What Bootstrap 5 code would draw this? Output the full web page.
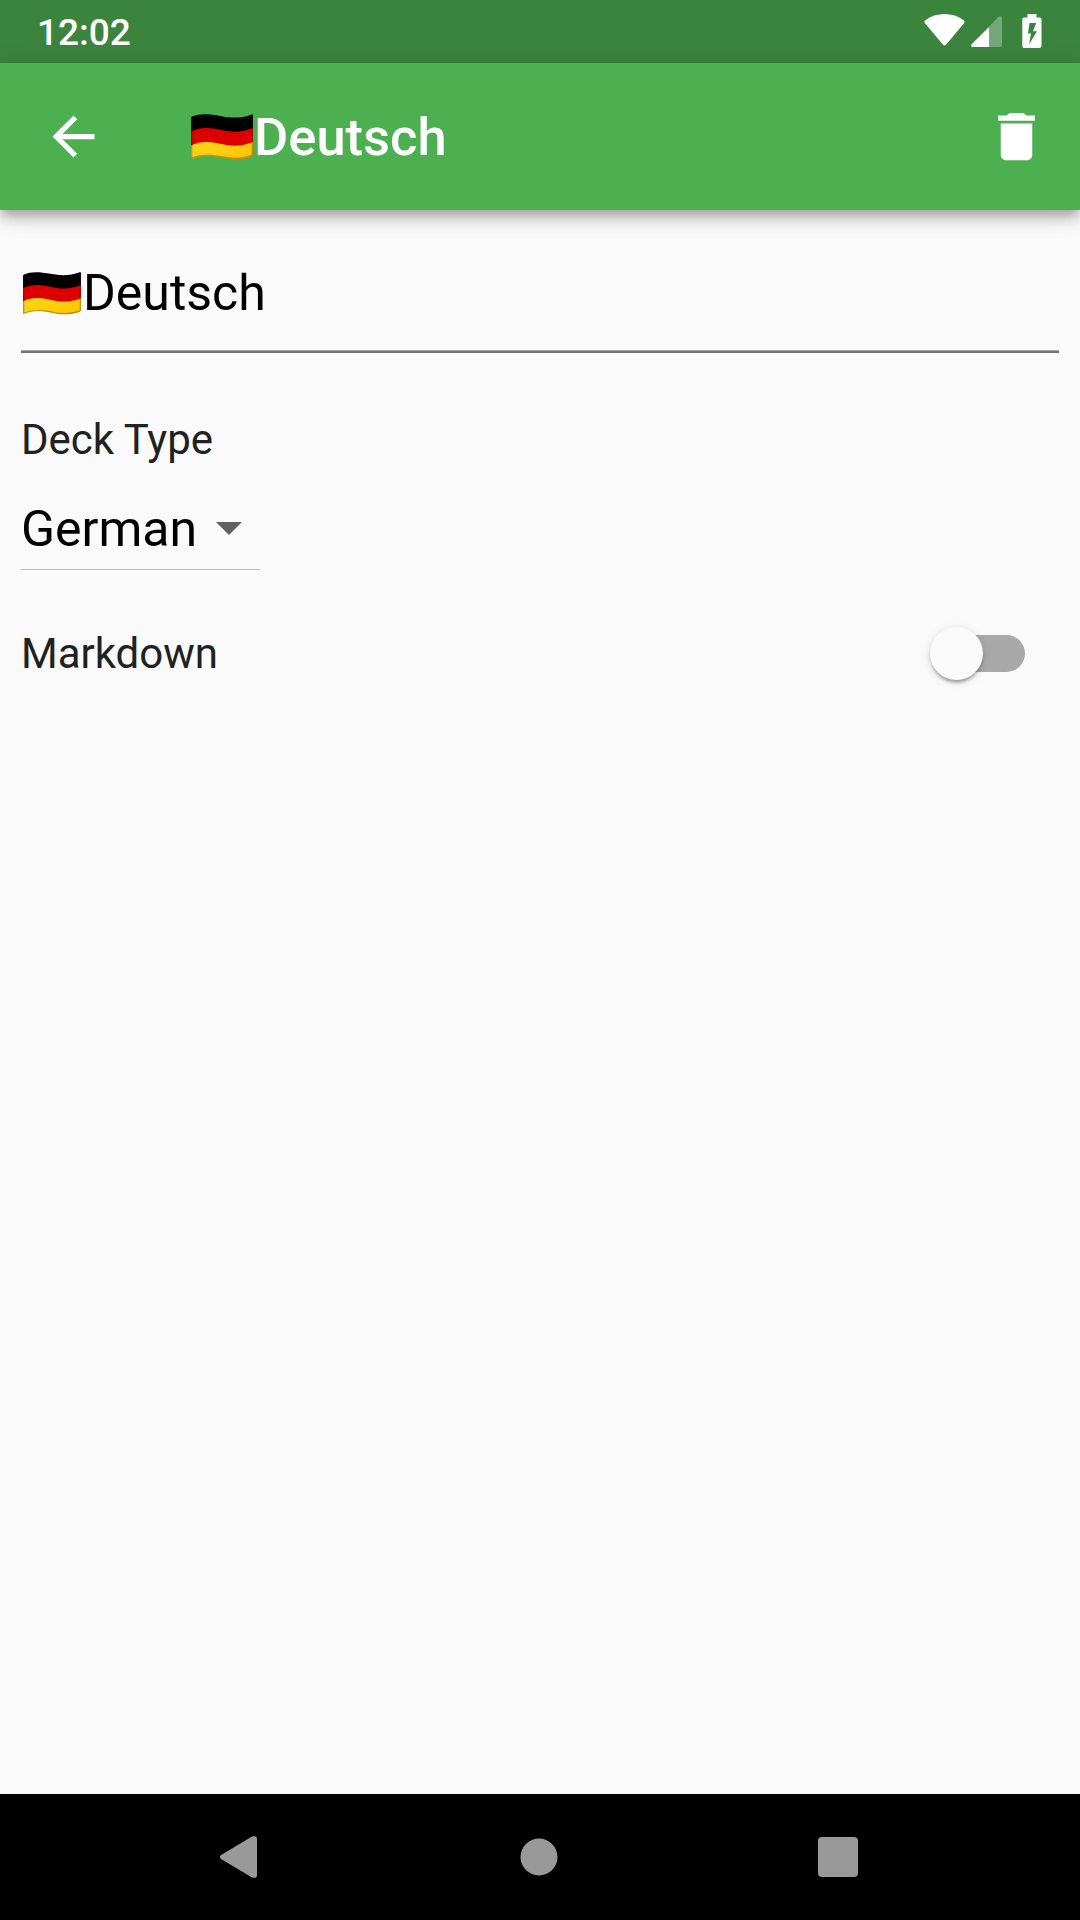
<!DOCTYPE html>
<html lang="en">
<head>
<meta charset="utf-8">
<meta name="viewport" content="width=device-width, initial-scale=1">
<title>Deck settings</title>
<link href="https://cdn.jsdelivr.net/npm/bootstrap@5.3.0/dist/css/bootstrap.min.css" rel="stylesheet">
<style>
  body { font-family: Roboto, "Noto Sans", sans-serif; background: #fafafa; color: #000; height: 1920px; overflow: hidden; }
  svg { display: block; flex: none; }
  .status-strip { height: 63px; background: #3b843e; color: #fff; padding: 2px 38px 0 37px; font-size: 37px; font-weight: 500; line-height: 63px; }
  .status-icons { height: 34px; margin-top: -3px; }
  .battery { margin-left: 19px; }
  .app-bar { height: 147px; background: #4caf50; color: #fff; padding: 0 32px 0 42px; box-shadow: 0 5px 10px -2px rgba(0,0,0,.2), 0 10px 13px rgba(0,0,0,.14), 0 3px 26px rgba(0,0,0,.12); z-index: 1; }
  .app-title { font-size: 52.5px; font-weight: 500; line-height: 60px; margin-left: 86px; }
  .app-title svg { margin-right: 1px; }
  .settings { padding: 53px 21px 0; }
  .name-field { font-size: 50px; line-height: 60px; padding-bottom: 30px; box-shadow: inset 0 -2px #727272, inset 0 -3px #a8a8a8; height: 90px; }
  .name-field svg { margin-right: 2px; }
  .item-label { font-size: 42px; line-height: 50px; color: #212121; }
  .deck-label { margin-top: 62px; }
  .type-select { margin-top: 34px; width: 239px; height: 71px; padding-bottom: 10px; font-size: 50px; line-height: 60px; border-bottom: 1px solid #bdbdbd; padding-right: 18.500px; }
  .type-select svg { margin-top: -2px; }
  .switch-row { margin-top: 21px; height: 126px; padding-right: 34px; }
  .toggle { width: 95px; height: 53px; margin-top: -1px; }
  .toggle-track { width: 87px; height: 37px; border-radius: 19px; background: #a9a9a9; }
  .toggle-thumb { left: 0; top: 0; width: 53px; height: 53px; border-radius: 50%; background: #fafafa; box-shadow: 0 5px 3px -3px rgba(0,0,0,.2), 0 3px 3px rgba(0,0,0,.14), 0 2px 8px rgba(0,0,0,.14); }
  .nav-strip { height: 126px; background: #000; padding: 0 222px 0 219px; }
  .nav-home { margin-left: 3.500px; }
</style>
</head>
<body class="d-flex flex-column">
<svg width="0" height="0" class="position-absolute" aria-hidden="true">
  <defs>
    <linearGradient id="gold" x1="0" y1="0" x2="1" y2="1"><stop offset="0" stop-color="#ffd91a"/><stop offset="1" stop-color="#ffc000"/></linearGradient>
    <clipPath id="wave"><path d="M0 4Q0 3 1.200 2.600C8 -.6 17-.5 29 2C40 4.400 50 4.100 59.600.400Q61-.200 61 1V41Q61 42 59.800 42.500C50 46 41 46 30 43.500C18 41 10 41 1.300 44.700Q0 45.200 0 44Z"/></clipPath>
    <symbol id="flag-de" viewBox="0 0 61 46" preserveAspectRatio="none">
      <g clip-path="url(#wave)">
        <path d="M0-2H61V20H0Z" fill="#000"/>
        <path d="M0 17.500C9 12.800 18 13.200 30 16C42 18.800 51 18 61 14V31L30 34H0Z" fill="#dd0000"/>
        <path d="M0 31.500C9 26.800 18 27.200 30 30C42 32.800 51 32 61 28V48H0Z" fill="url(#gold)"/>
        <path d="M.5 3V44.500C10 40.500 18 40.500 30 43C42 45.800 51 45.300 60.500 41.700V1" fill="none" stroke="#302000" stroke-opacity=".32" stroke-width="1.800"/>
      </g>
    </symbol>
  </defs>
</svg>

<div class="status-strip d-flex align-items-center justify-content-between flex-shrink-0">
  <span>12:02</span>
  <div class="status-icons d-flex">
    <svg width="41" height="34" viewBox="0 0 41 34"><path d="M1.300 6.300C12.500-2 28.500-2 39.700 6.300Q41.200 7.600 40 9.200L22 30.800Q20.500 32.300 19 30.800L1 9.200Q-.2 7.600 1.300 6.300Z" fill="#fff"/></svg>
    <svg class="ms-1" width="34" height="34" viewBox="0 0 34 34"><path d="M20 12.800 29.300 3Q32.500.9 33 4V31Q33 33 31 33H20Z" fill="#fff" fill-opacity=".3"/><path d="M20 13V33H3.500Q.9 32.500 2.600 30.200Z" fill="#fff"/></svg>
    <svg class="battery" width="20" height="34" viewBox="0 0 20 34"><path fill-rule="evenodd" d="M5.500 0H14.500V3.500H17.500Q19.500 3.500 19.500 5.500V32Q19.500 34 17.500 34H2Q.3 34 .3 32V5.500Q.3 3.500 2 3.500H5.500ZM7.500 9 6 19.500H9L7 30.500 15 17.200H11L14.200 9Z" fill="#fff"/></svg>
  </div>
</div>

<header class="app-bar d-flex align-items-center position-relative flex-shrink-0">
  <svg width="63" height="63" viewBox="0 0 24 24" fill="#fff"><path d="M20 11H7.830l5.590-5.590L12 4l-8 8 8 8 1.410-1.410L7.830 13H20z"/></svg>
  <div class="app-title d-flex align-items-center me-auto"><svg width="62" height="46" role="img" aria-label="German flag"><use href="#flag-de"/></svg>Deutsch</div>
  <svg width="63" height="63" viewBox="0 0 24 24" fill="#fff"><path d="M6 19c0 1.100.9 2 2 2h8c1.100 0 2-.9 2-2V7H6zM19 4h-3.300q-.5-1-1.500-1H9.800q-1 0-1.500 1H5v2h14z"/></svg>
</header>

<main class="settings flex-fill">
  <div class="name-field d-flex align-items-center"><svg width="60" height="43" role="img" aria-label="German flag"><use href="#flag-de" x="2" width="58" height="43"/></svg>Deutsch</div>
  <div class="item-label deck-label">Deck Type</div>
  <div class="type-select d-flex align-items-center justify-content-between"><span>German</span><svg width="26" height="13" viewBox="0 0 26 13"><path d="M0 0H26L13 13Z" fill="#616161"/></svg></div>
  <div class="switch-row d-flex align-items-center justify-content-between">
    <span class="item-label">Markdown</span>
    <div class="toggle position-relative d-flex align-items-center justify-content-end"><span class="toggle-track"></span><span class="toggle-thumb position-absolute"></span></div>
  </div>
</main>

<nav class="nav-strip d-flex align-items-center justify-content-between flex-shrink-0">
  <svg width="38" height="42" viewBox="0 0 38 42"><path d="M2.500 18.800 33 .6Q38 -1 38 3V39Q38 43 33 41.400L2.500 23.200Q-.8 21 2.500 18.800Z" fill="#999"/></svg>
  <svg class="nav-home" width="38" height="38" viewBox="0 0 38 38"><circle cx="19" cy="19" r="18.500" fill="#999"/></svg>
  <svg width="40" height="40" viewBox="0 0 40 40"><rect width="40" height="40" rx="4" fill="#999"/></svg>
</nav>
<script src="https://cdn.jsdelivr.net/npm/bootstrap@5.3.0/dist/js/bootstrap.bundle.min.js"></script>
</body>
</html>
